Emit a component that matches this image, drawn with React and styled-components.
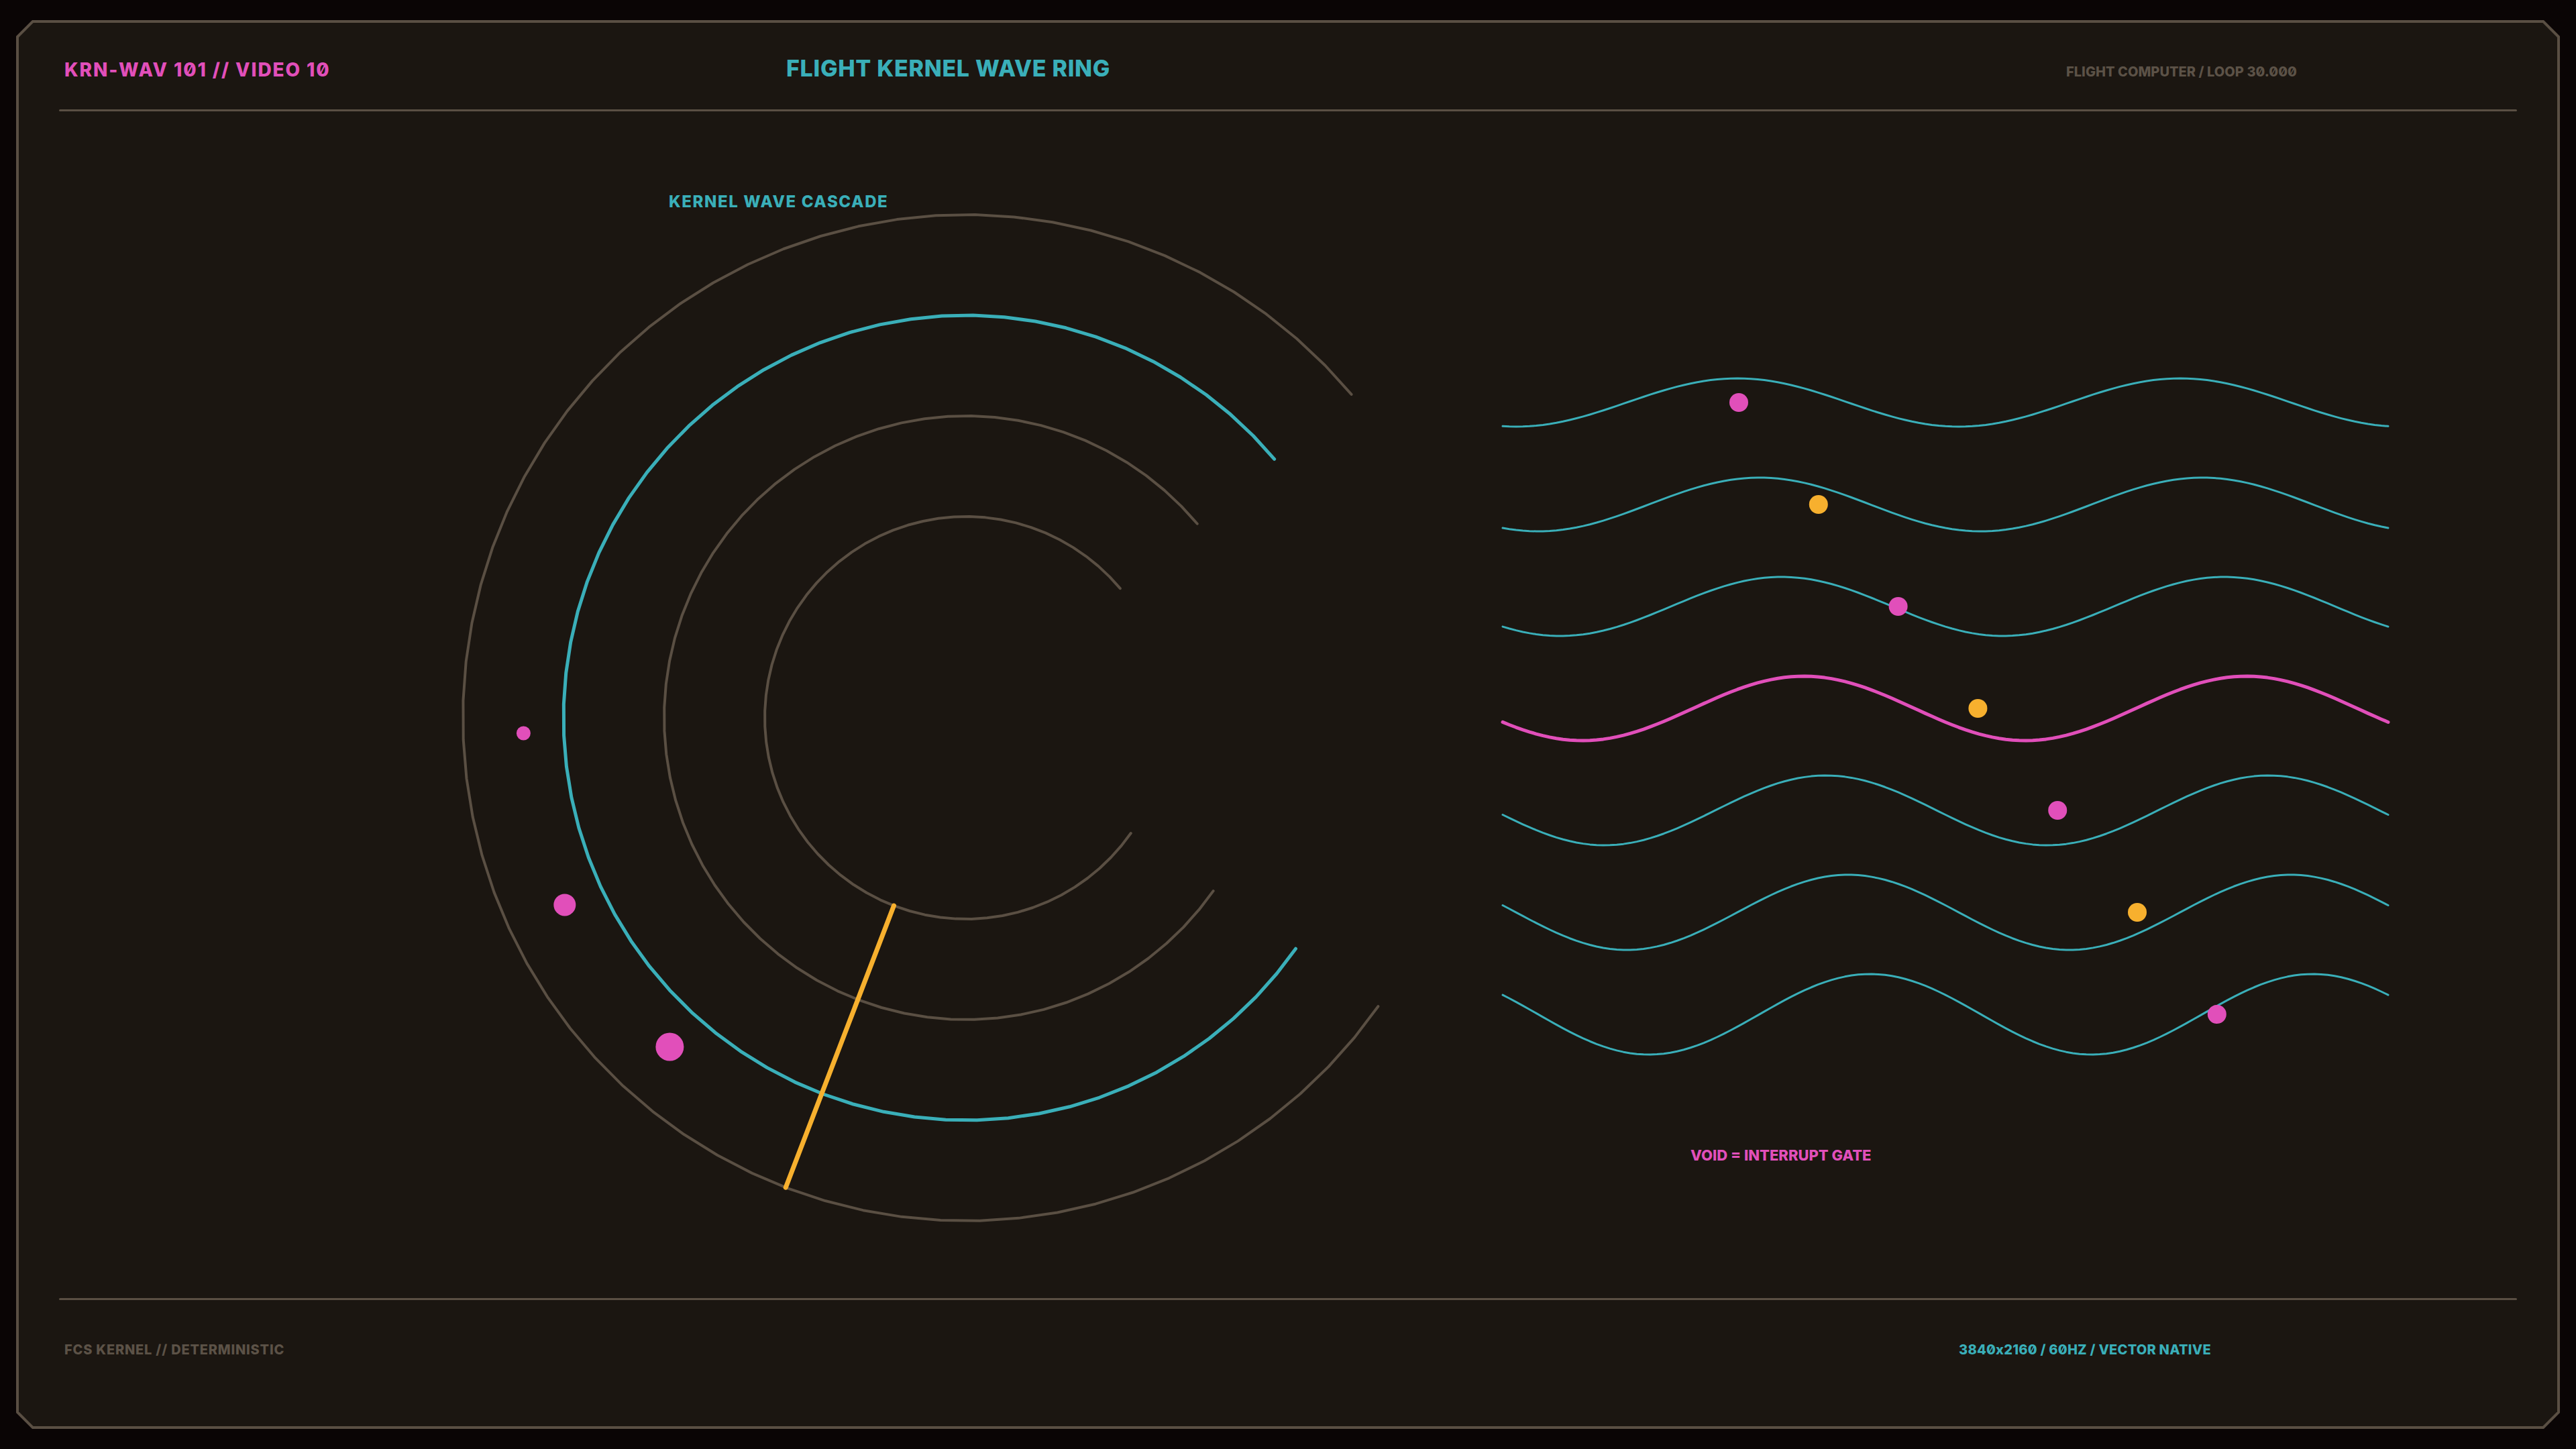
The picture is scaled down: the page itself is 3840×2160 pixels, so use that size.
import React from 'react';
import styled, { createGlobalStyle } from 'styled-components';

const C = {
  outer: '#0a0505',
  panel: '#1b1611',
  line: '#5a4f43',
  muted: '#5c5247',
  teal: '#3aafb9',
  pink: '#e14fba',
  orange: '#f7b02e',
};

const GlobalStyle = createGlobalStyle`
  html, body { margin: 0; padding: 0; background: ${C.outer}; }
  body { font-family: Inter, "Noto Sans", "Liberation Sans", sans-serif; font-feature-settings: "zero" 1; }
`;

const Page = styled.div`
  width: 3840px;
  height: 2160px;
  box-sizing: border-box;
  padding: 30px 24px;
  background: ${C.outer};
`;

const cut = (n) => `polygon(${n}px 0, calc(100% - ${n}px) 0, 100% ${n}px, 100% calc(100% - ${n}px), calc(100% - ${n}px) 100%, ${n}px 100%, 0 calc(100% - ${n}px), 0 ${n}px)`;

const Frame = styled.div`
  height: 100%;
  box-sizing: border-box;
  padding: 4px;
  background: ${C.line};
  clip-path: ${cut(24)};
`;

const Panel = styled.div`
  height: 100%;
  box-sizing: border-box;
  background: ${C.panel};
  clip-path: ${cut(21.7)};
  display: flex;
  flex-direction: column;
  padding: 0 60px;
`;

const Header = styled.header`
  flex: none;
  height: 129px;
  box-sizing: border-box;
  padding: 51px 8px 0;
  display: grid;
  grid-template-columns: 1076px 1908px 1fr;
  align-items: baseline;
`;

const Text = styled.span`
  display: block;
  font-weight: 800;
  font-size: ${(p) => p.$size}px;
  line-height: 1;
  color: ${(p) => p.$color};
  letter-spacing: ${(p) => p.$ls || 0}px;
  white-space: nowrap;
`;

const Rule = styled.div`
  flex: none;
  height: 3px;
  border-radius: 2px;
  background: ${C.line};
`;

const Main = styled.main`
  flex: 1;
  min-height: 0;
  display: flex;
  align-items: flex-start;
`;

const RingColumn = styled.section`
  margin-left: 592px;
  display: flex;
  flex-direction: column;
`;

const Caption = styled(Text)`
  margin: 123px 0 0 317px;
`;

const WaveColumn = styled.section`
  margin: 374px 0 0 150px;
  display: flex;
  flex-direction: column;
`;

const Legend = styled(Text)`
  margin: 111px 0 0 300px;
`;

const Chart = styled.svg`
  display: block;
  flex: none;
  overflow: visible;
`;

const Footer = styled.footer`
  flex: none;
  height: 188px;
  box-sizing: border-box;
  padding: 64px 8px 0;
  display: grid;
  grid-template-columns: 2824px 1fr;
  align-items: baseline;
`;

/* ---------- ring chart ---------- */
const RING_W = 1390;
const RING_H = 1520;
const RCX = 760;
const RCY = 757;
const deg = (d) => (d * Math.PI) / 180;

function arcPoints(r, a0 = 35, a1 = 320, n = 64) {
  const pts = [];
  for (let k = 0; k <= n; k++) {
    const a = deg(a0 + ((a1 - a0) * k) / n);
    pts.push(`${(RCX + r * Math.cos(a)).toFixed(2)},${(RCY + r * Math.sin(a)).toFixed(2)}`);
  }
  return pts.join(' ');
}

const rings = [
  { r: 750, color: C.line, w: 4 },
  { r: 600, color: C.teal, w: 5 },
  { r: 450, color: C.line, w: 4 },
  { r: 300, color: C.line, w: 4 },
];

const ringDots = [
  { a: 178, r: 10.5 },
  { a: 155, r: 16.5 },
  { a: 132, r: 21 },
];

function RingChart() {
  const a = deg(111);
  const x1 = RCX + 300 * Math.cos(a);
  const y1 = RCY + 300 * Math.sin(a);
  const x2 = RCX + 750 * Math.cos(a);
  const y2 = RCY + 750 * Math.sin(a);
  return (
    <Chart width={RING_W} height={RING_H} viewBox={`0 0 ${RING_W} ${RING_H}`}>
      {rings.map((g) => (
        <polyline
          key={g.r}
          points={arcPoints(g.r)}
          fill="none"
          stroke={g.color}
          strokeWidth={g.w}
          strokeLinecap="round"
          strokeLinejoin="round"
        />
      ))}
      <line x1={x1} y1={y1} x2={x2} y2={y2} stroke={C.orange} strokeWidth={7} strokeLinecap="round" />
      {ringDots.map((d, i) => (
        <circle
          key={i}
          cx={RCX + 660 * Math.cos(deg(d.a))}
          cy={RCY + 660 * Math.sin(deg(d.a))}
          r={d.r}
          fill={C.pink}
        />
      ))}
    </Chart>
  );
}

/* ---------- wave chart ---------- */
const WAVE_W = 1360;
const WAVE_H = 1060;
const OX = 2220;
const OY = 540;

function wavePath(i) {
  const c = 600 + 152 * i - OY;
  const A = 36 + 4 * i;
  const phi = -1.76 - 0.314 * i;
  const pts = [];
  const n = 132;
  for (let k = 0; k <= n; k++) {
    const t = k / n;
    const x = 2240 - OX + t * 1320;
    const y = c - A * Math.sin(4 * Math.PI * t + phi);
    pts.push(`${x.toFixed(2)},${y.toFixed(2)}`);
  }
  return pts.join(' ');
}

function WaveChart() {
  const waves = [0, 1, 2, 3, 4, 5, 6];
  return (
    <Chart width={WAVE_W} height={WAVE_H} viewBox={`0 0 ${WAVE_W} ${WAVE_H}`}>
      {waves.map((i) => (
        <polyline
          key={i}
          points={wavePath(i)}
          fill="none"
          stroke={i === 3 ? C.pink : C.teal}
          strokeWidth={i === 3 ? 5 : 3}
          strokeLinecap="round"
          strokeLinejoin="round"
        />
      ))}
      {waves.map((i) => (
        <circle
          key={`d${i}`}
          cx={2592 + 118.8 * i - OX}
          cy={600 + 152 * i - OY}
          r={14}
          fill={i % 2 === 0 ? C.pink : C.orange}
        />
      ))}
    </Chart>
  );
}

export default function App() {
  return (
    <>
      <GlobalStyle />
      <Page>
        <Frame>
          <Panel>
            <Header>
              <Text $size={28} $color={C.pink} $ls={1.9}>KRN-WAV 101 // VIDEO 10</Text>
              <Text $size={34} $color={C.teal} $ls={0.7}>FLIGHT KERNEL WAVE RING</Text>
              <Text $size={20} $color={C.muted} $ls={0.05}>FLIGHT COMPUTER / LOOP 30.000</Text>
            </Header>
            <Rule />
            <Main>
              <RingColumn>
                <Caption $size={24} $color={C.teal} $ls={1.6}>KERNEL WAVE CASCADE</Caption>
                <RingChart />
              </RingColumn>
              <WaveColumn>
                <WaveChart />
                <Legend $size={22} $color={C.pink} $ls={0}>VOID = INTERRUPT GATE</Legend>
              </WaveColumn>
            </Main>
            <Rule />
            <Footer>
              <Text $size={20} $color={C.muted} $ls={0.8}>FCS KERNEL // DETERMINISTIC</Text>
              <Text $size={20} $color={C.teal} $ls={0.25}>3840x2160 / 60HZ / VECTOR NATIVE</Text>
            </Footer>
          </Panel>
        </Frame>
      </Page>
    </>
  );
}
